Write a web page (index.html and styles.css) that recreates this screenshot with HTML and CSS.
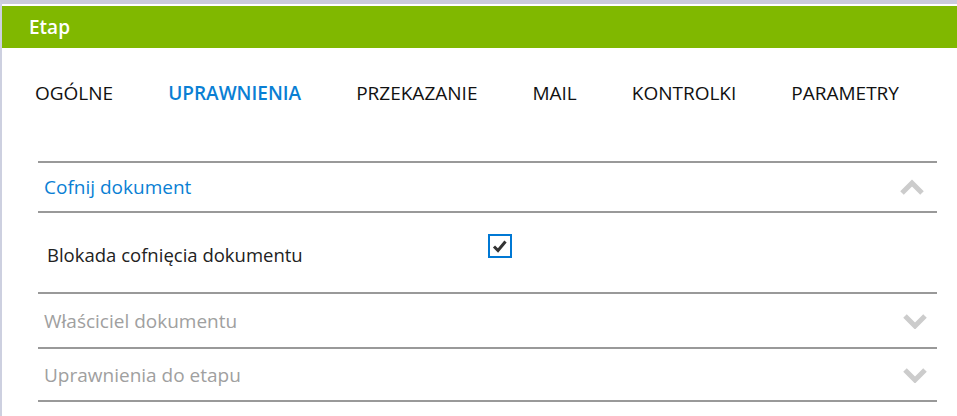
FILE: index.html
```html
<!DOCTYPE html>
<html lang="pl">
<head>
    <meta charset="UTF-8">
    <title>Etap</title>
    <link rel="stylesheet" href="styles.css">
</head>
<body>
    <div class="window">
        <header class="title-bar">Etap</header>

        <nav class="tabs">
            <span class="tab">OGÓLNE</span>
            <span class="tab active">UPRAWNIENIA</span>
            <span class="tab">PRZEKAZANIE</span>
            <span class="tab">MAIL</span>
            <span class="tab">KONTROLKI</span>
            <span class="tab">PARAMETRY</span>
        </nav>

        <div class="sections">
            <section class="section open">
                <div class="section-head">
                    <span>Cofnij dokument</span>
                    <svg class="chevron" width="24" height="16" viewBox="0 0 24 16"><path d="M2 14 L12 4 L22 14" fill="none" stroke="#cccccc" stroke-width="5"/></svg>
                </div>
                <div class="section-body">
                    <label class="field-label">Blokada cofnięcia dokumentu</label>
                    <span class="checkbox">
                        <svg width="16" height="16" viewBox="0 0 16 16"><path d="M2 8.5 L6 12.5 L13.5 3.5" fill="none" stroke="#333" stroke-width="3"/></svg>
                    </span>
                </div>
            </section>

            <section class="section">
                <div class="section-head">
                    <span>Właściciel dokumentu</span>
                    <svg class="chevron" width="24" height="16" viewBox="0 0 24 16"><path d="M2 3 L12 13 L22 3" fill="none" stroke="#cccccc" stroke-width="5"/></svg>
                </div>
            </section>

            <section class="section">
                <div class="section-head">
                    <span>Uprawnienia do etapu</span>
                    <svg class="chevron" width="24" height="16" viewBox="0 0 24 16"><path d="M2 3 L12 13 L22 3" fill="none" stroke="#cccccc" stroke-width="5"/></svg>
                </div>
            </section>
        </div>
    </div>
</body>
</html>
```

FILE: styles.css
```css
:root {
    --green: #80b800;
    --blue: #0a7fd4;
    --line: #999999;
}

* {
    box-sizing: border-box;
    margin: 0;
    padding: 0;
}

body {
    font-family: 'Open Sans', 'Noto Sans', sans-serif;
    background: #ffffff;
    color: #1a1a1a;
}

.window {
    height: 416px;
    border-top: 4px solid #cbcbdb;
    border-left: 2px solid #cdd0e0;
    padding-top: 2px;
}

.title-bar {
    height: 42px;
    background-color: var(--green);
    color: white;
    font-size: 19px;
    font-weight: 600;
    line-height: 42px;
    padding-left: 27px;
}

.tabs {
    display: flex;
    gap: 55px;
    padding: 32px 0 0 33px;
    height: 113px;
    font-size: 19px;
}

.tab {
    color: #111;
}

.tab.active {
    color: var(--blue);
    font-weight: 600;
}

.sections {
    margin: 0 20px 0 36px;
    border-top: 2px solid var(--line);
}

.section {
    border-bottom: 2px solid var(--line);
}

.section-head {
    display: flex;
    align-items: center;
    justify-content: space-between;
    height: 53px;
    padding: 0 10px 0 6px;
    font-size: 19px;
    color: #a0a0a0;
}

.section:last-child .section-head {
    height: 51px;
}

.section.open .section-head {
    height: 50px;
    color: var(--blue);
    border-bottom: 2px solid var(--line);
    padding-right: 13px;
}

.section-body {
    display: flex;
    align-items: center;
    height: 79px;
    padding-left: 9px;
}

.field-label {
    width: 441px;
    font-size: 18.5px;
    color: #222;
    padding-top: 3px;
}

.checkbox {
    display: flex;
    align-items: center;
    justify-content: center;
    width: 24px;
    height: 24px;
    border: 2px solid #0078d4;
    margin-top: -14px;
}
```
